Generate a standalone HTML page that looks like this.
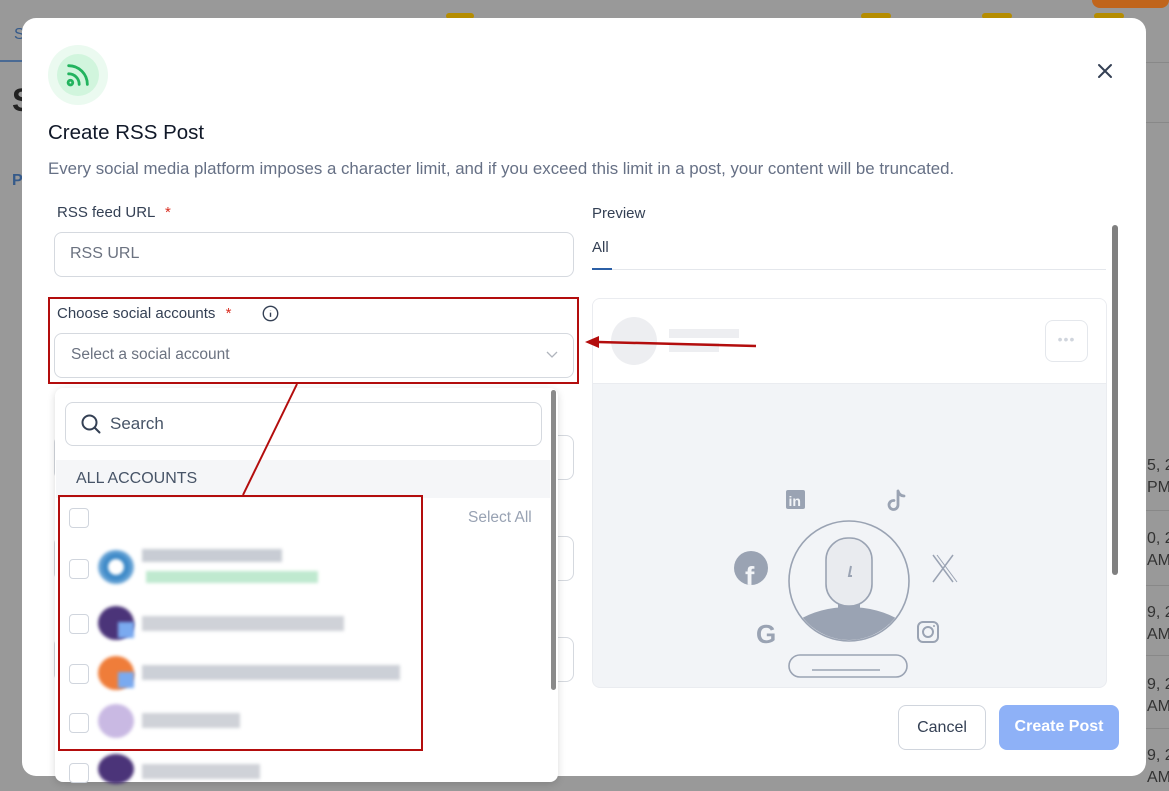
<!DOCTYPE html><html><head><style>
*{box-sizing:border-box;margin:0;padding:0}
body{width:1169px;height:791px;overflow:hidden;background:#999;font-family:"Liberation Sans",sans-serif;position:relative}
.a{position:absolute}
.modal{left:22px;top:18px;width:1124px;height:758px;background:#fff;border-radius:14px}
.lbl{font-size:15px;color:#344054}
.inp{border:1px solid #d5d9df;border-radius:8px;background:#fff}
.ph{font-size:16px;color:#6b7280}
.cb{width:20px;height:20px;border:1px solid #d0d5dd;border-radius:4px;background:#fff}
.bl{filter:blur(1.5px)}
.red{border:2px solid #b30d0d}
.dt{font-size:16px;color:#333;line-height:22px;white-space:nowrap}
</style></head><body>
<div class="a" style="left:0;top:60px;width:22px;height:2px;background:#4a6a94"></div>
<div class="a" style="left:14px;top:26px;color:#355a8a;font-size:16px">S</div>
<div class="a" style="left:12px;top:82px;color:#222;font-size:32px;font-weight:bold">S</div>
<div class="a" style="left:12px;top:172px;color:#355a8a;font-size:16px;font-weight:bold">P</div>
<div class="a" style="left:446px;top:13px;width:28px;height:6px;background:#b58c00;border-radius:3px"></div>
<div class="a" style="left:861px;top:13px;width:30px;height:6px;background:#b58c00;border-radius:3px"></div>
<div class="a" style="left:982px;top:13px;width:30px;height:6px;background:#b58c00;border-radius:3px"></div>
<div class="a" style="left:1094px;top:13px;width:30px;height:6px;background:#b58c00;border-radius:3px"></div>
<div class="a" style="left:1092px;top:0;width:77px;height:8px;background:#c0651c;border-radius:0 0 8px 8px"></div>
<div class="a" style="left:1146px;top:62px;width:23px;height:1px;background:#888"></div>
<div class="a" style="left:1146px;top:122px;width:23px;height:1px;background:#888"></div>
<div class="a" style="left:1146px;top:510px;width:23px;height:1px;background:#888"></div>
<div class="a" style="left:1146px;top:585px;width:23px;height:1px;background:#888"></div>
<div class="a" style="left:1146px;top:655px;width:23px;height:1px;background:#888"></div>
<div class="a" style="left:1146px;top:728px;width:23px;height:1px;background:#888"></div>
<div class="a dt" style="left:1147px;top:455px">5, 2<br>PM</div>
<div class="a dt" style="left:1147px;top:528px">0, 2<br>AM</div>
<div class="a dt" style="left:1147px;top:602px">9, 2<br>AM</div>
<div class="a dt" style="left:1147px;top:674px">9, 2<br>AM</div>
<div class="a dt" style="left:1147px;top:745px">9, 2<br>AM</div>

<div class="a modal"></div>
<div class="a" style="left:48px;top:45px;width:60px;height:60px;border-radius:50%;background:#ebfaf0"></div>
<div class="a" style="left:57px;top:54px;width:42px;height:42px;border-radius:50%;background:#d1f5dd"></div>
<svg class="a" style="left:64px;top:61px" width="28" height="28" viewBox="0 0 24 24" fill="none" stroke="#22b35e" stroke-width="2.4" stroke-linecap="round"><circle cx="5.5" cy="18.5" r="2"/><path d="M4 11a9 9 0 0 1 9 9"/><path d="M4 4a16 16 0 0 1 16 16"/></svg>
<div class="a" style="left:48px;top:121px;font-size:20.5px;color:#101828">Create RSS Post</div>
<div class="a" style="left:48px;top:159px;font-size:16.85px;color:#667085;white-space:nowrap">Every social media platform imposes a character limit, and if you exceed this limit in a post, your content will be truncated.</div>
<svg class="a" style="left:1096px;top:62px" width="18" height="18" viewBox="0 0 18 18" stroke="#344054" stroke-width="2" stroke-linecap="round"><path d="M3 3l12 12M15 3L3 15"/></svg>

<div class="a lbl" style="left:57px;top:204px">RSS feed URL <span style="color:#d92d20;margin-left:6px">*</span></div>
<div class="a inp" style="left:54px;top:232px;width:520px;height:45px"></div>
<div class="a ph" style="left:70px;top:245px">RSS URL</div>

<div class="a red" style="left:48px;top:297px;width:531px;height:87px"></div>
<div class="a lbl" style="left:57px;top:305px">Choose social accounts <span style="color:#d92d20;margin-left:6px">*</span></div>
<svg class="a" style="left:262px;top:305px" width="17" height="17" viewBox="0 0 16 16" fill="none" stroke="#344054" stroke-width="1.3"><circle cx="8" cy="8" r="6.8"/><path d="M8 7.2v4M8 4.8v.3"/></svg>
<div class="a inp" style="left:54px;top:333px;width:520px;height:45px"></div>
<div class="a ph" style="left:71px;top:346px;font-size:15.5px">Select a social account</div>
<svg class="a" style="left:545px;top:350px" width="14" height="10" viewBox="0 0 14 10" fill="none" stroke="#b0b5bd" stroke-width="1.3"><path d="M2 2l5 5 5-5"/></svg>

<div class="a inp" style="left:54px;top:435px;width:520px;height:45px"></div>
<div class="a inp" style="left:54px;top:536px;width:520px;height:45px"></div>
<div class="a inp" style="left:54px;top:637px;width:520px;height:45px"></div>

<div class="a" style="left:55px;top:388px;width:503px;height:394px;background:#fff;border-radius:8px;box-shadow:0 2px 8px rgba(0,0,0,.15)"></div>
<div class="a" style="left:551px;top:390px;width:5px;height:300px;background:#8a8a8a;border-radius:3px"></div>
<div class="a inp" style="left:65px;top:402px;width:477px;height:44px"></div>
<svg class="a" style="left:80px;top:413px" width="22" height="22" viewBox="0 0 22 22" fill="none" stroke="#344054" stroke-width="2"><circle cx="9.5" cy="9.5" r="7"/><path d="M15 15l4.5 4.5" stroke-linecap="round"/></svg>
<div class="a" style="left:110px;top:414px;font-size:17px;color:#475467">Search</div>
<div class="a" style="left:56px;top:460px;width:494px;height:38px;background:#f5f6f8"></div>
<div class="a" style="left:76px;top:470px;font-size:16px;color:#475467">ALL ACCOUNTS</div>
<div class="a cb" style="left:69px;top:508px"></div>
<div class="a" style="left:468px;top:509px;font-size:15.5px;color:#98a2b3">Select All</div>

<div class="a cb" style="left:69px;top:559px"></div>
<div class="a bl" style="left:98px;top:550px;width:36px;height:34px;border-radius:50%;background:radial-gradient(circle,#fff 30%,#2b7ec2 35%,#6fa8d8 70%,#fff 80%)"></div>
<div class="a bl" style="left:142px;top:549px;width:140px;height:13px;background:#c8ccd4"></div>
<div class="a bl" style="left:146px;top:571px;width:172px;height:12px;background:#bfe9cf"></div>
<div class="a cb" style="left:69px;top:614px"></div>
<div class="a bl" style="left:98px;top:606px;width:36px;height:34px;border-radius:50%;background:#4b3479"></div>
<div class="a bl" style="left:118px;top:622px;width:16px;height:16px;background:#7aaaf0"></div>
<div class="a bl" style="left:142px;top:616px;width:202px;height:15px;background:#cfd2d8"></div>
<div class="a cb" style="left:69px;top:664px"></div>
<div class="a bl" style="left:98px;top:656px;width:36px;height:34px;border-radius:50%;background:#ef7d3a"></div>
<div class="a bl" style="left:118px;top:672px;width:16px;height:16px;background:#7aaaf0"></div>
<div class="a bl" style="left:142px;top:665px;width:258px;height:15px;background:#ccd0d7"></div>
<div class="a cb" style="left:69px;top:713px"></div>
<div class="a bl" style="left:98px;top:704px;width:36px;height:34px;border-radius:50%;background:#c9b9e3"></div>
<div class="a bl" style="left:142px;top:713px;width:98px;height:15px;background:#cfd2d8"></div>
<div class="a cb" style="left:69px;top:763px"></div>
<div class="a bl" style="left:98px;top:754px;width:36px;height:30px;border-radius:50%;background:#4b3479"></div>
<div class="a bl" style="left:142px;top:764px;width:118px;height:15px;background:#cfd2d8"></div>

<div class="a red" style="left:58px;top:495px;width:365px;height:256px"></div>

<div class="a lbl" style="left:592px;top:205px">Preview</div>
<div class="a" style="left:592px;top:239px;font-size:15px;color:#344054">All</div>
<div class="a" style="left:592px;top:268px;width:20px;height:2px;background:#2b5fa6"></div>
<div class="a" style="left:612px;top:269px;width:494px;height:1px;background:#e4e7ec"></div>
<div class="a" style="left:1112px;top:225px;width:6px;height:350px;background:#808080;border-radius:3px"></div>
<div class="a" style="left:592px;top:298px;width:515px;height:390px;border:1px solid #eaecf0;border-radius:8px;background:#f2f4f7;overflow:hidden">
 <div style="height:85px;background:#fff;border-bottom:1px solid #eaecf0;position:relative">
  <div class="a" style="left:18px;top:18px;width:46px;height:48px;border-radius:50%;background:#edeef1"></div>
  <div class="a" style="left:76px;top:30px;width:70px;height:9px;background:#edeef1"></div>
  <div class="a" style="left:76px;top:44px;width:50px;height:9px;background:#edeef1"></div>
  <div class="a" style="left:452px;top:21px;width:43px;height:42px;border:1px solid #e4e7ec;border-radius:8px;text-align:center;line-height:36px;color:#d0d5dd;font-size:14px;letter-spacing:1px">•••</div>
 </div>
</div>
<svg class="a" style="left:730px;top:485px" width="250" height="200" viewBox="0 0 250 200">
 <rect x="56" y="5" width="19" height="19" rx="2" fill="#9aa3b3"/>
 <text x="58.5" y="21" font-family="Liberation Sans" font-weight="bold" font-size="14" fill="#f2f4f7">in</text>
 <clipPath id="fb"><circle cx="21" cy="83" r="17"/></clipPath>
 <circle cx="21" cy="83" r="17" fill="#9aa3b3"/>
 <text x="15" y="101" font-family="Liberation Sans" font-weight="bold" font-size="28" fill="#f2f4f7" clip-path="url(#fb)">f</text>
 <path d="M168 6v14a4.5 4.5 0 1 1-4-4.5M168 6c1 3 3 5 6 5" fill="none" stroke="#9aa3b3" stroke-width="2.8" stroke-linecap="round"/>
 <path d="M203 70l20 27M223 70l-20 27" stroke="#9aa3b3" stroke-width="1.5"/><path d="M207 70l20 27" stroke="#9aa3b3" stroke-width="1"/>
 <text x="26" y="158" font-family="Liberation Sans" font-weight="bold" font-size="26" fill="#9aa3b3">G</text>
 <rect x="188" y="137" width="20" height="20" rx="5" fill="none" stroke="#9aa3b3" stroke-width="2"/><circle cx="198" cy="147" r="5" fill="none" stroke="#9aa3b3" stroke-width="2"/><circle cx="204" cy="141" r="1" fill="#9aa3b3"/>
 <circle cx="119" cy="96" r="60" fill="#f2f4f7" stroke="#9aa3b3" stroke-width="1.6"/>
 <clipPath id="c"><circle cx="119" cy="96" r="59"/></clipPath>
 <g clip-path="url(#c)"><rect x="108" y="110" width="22" height="30" fill="#9aa3b3"/><ellipse cx="119" cy="168" rx="72" ry="46" fill="#9aa3b3"/></g>
 <rect x="96" y="53" width="46" height="68" rx="22" fill="#e9ebef" stroke="#9aa3b3" stroke-width="1.6"/>
 <path d="M121 81l-2 10h3" stroke="#9aa3b3" stroke-width="2" fill="none"/>
 <rect x="59" y="170" width="118" height="22" rx="11" fill="#f2f4f7" stroke="#9aa3b3" stroke-width="1.6"/>
 <path d="M82 185h68" stroke="#9aa3b3" stroke-width="1.6"/>
</svg>
<svg class="a" style="left:0;top:0" width="1169" height="791"><path d="M297 384L243 495" stroke="#b30d0d" stroke-width="2"/><path d="M756 346L598 342" stroke="#b30d0d" stroke-width="2.5"/><path d="M585 342l14-6v12z" fill="#b30d0d"/></svg>
<div class="a" style="left:898px;top:705px;width:88px;height:45px;border:1px solid #d0d5dd;border-radius:8px;text-align:center;line-height:43px;font-size:16px;color:#344054">Cancel</div>
<div class="a" style="left:999px;top:705px;width:120px;height:45px;background:#8eb1f7;border-radius:8px;text-align:center;line-height:43px;font-size:16px;color:#fff;font-weight:bold">Create Post</div>
</body></html>
